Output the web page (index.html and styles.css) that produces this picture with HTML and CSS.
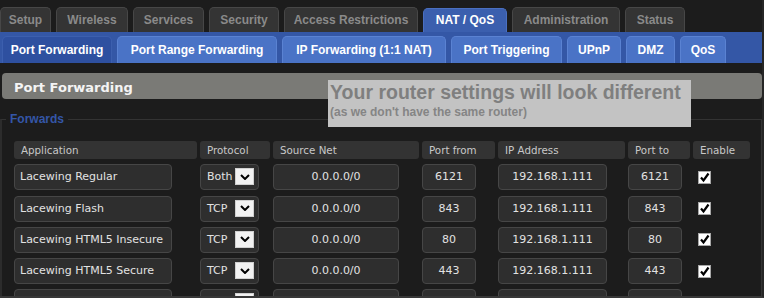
FILE: index.html
```html
<!DOCTYPE html>
<html>
<head>
<meta charset="utf-8">
<link rel="stylesheet" href="styles.css">
</head>
<body>
<div class="frame">
  <nav class="main-tabs">
    <div class="main-tab">Setup</div>
    <div class="main-tab">Wireless</div>
    <div class="main-tab">Services</div>
    <div class="main-tab">Security</div>
    <div class="main-tab">Access Restrictions</div>
    <div class="main-tab active">NAT / QoS</div>
    <div class="main-tab">Administration</div>
    <div class="main-tab">Status</div>
  </nav>
  <nav class="sub-bar">
    <div class="sub-tab active">Port Forwarding</div>
    <div class="sub-tab">Port Range Forwarding</div>
    <div class="sub-tab">IP Forwarding (1:1 NAT)</div>
    <div class="sub-tab">Port Triggering</div>
    <div class="sub-tab">UPnP</div>
    <div class="sub-tab">DMZ</div>
    <div class="sub-tab">QoS</div>
  </nav>
  <main class="content">
    <h2 class="section-title">Port Forwarding</h2>
    <fieldset class="forwards">
      <legend>Forwards</legend>
      <div class="table">
        <div class="th">Application</div>
        <div class="th">Protocol</div>
        <div class="th">Source Net</div>
        <div class="th">Port from</div>
        <div class="th">IP Address</div>
        <div class="th">Port to</div>
        <div class="th">Enable</div>

        <div class="cell"><div class="field w-app">Lacewing Regular</div></div>
        <div class="cell"><div class="field select"><span>Both</span><span class="drop"><svg width="10" height="6" viewBox="0 0 10 6"><polyline points="1,1 5,5 9,1" fill="none" stroke="#000" stroke-width="2"/></svg></span></div></div>
        <div class="cell"><div class="field center w-net">0.0.0.0/0</div></div>
        <div class="cell"><div class="field center w-port">6121</div></div>
        <div class="cell"><div class="field center w-ip">192.168.1.111</div></div>
        <div class="cell"><div class="field center w-port">6121</div></div>
        <div class="cell check-cell"><span class="check"><svg width="13" height="13" viewBox="0 0 13 13"><rect x="0.5" y="0.5" width="12" height="12" fill="#fff" stroke="#a8a8a8"/><polyline points="3,6.5 5.5,9.5 10.5,2.5" fill="none" stroke="#000" stroke-width="2.2"/></svg></span></div>

        <div class="cell"><div class="field w-app">Lacewing Flash</div></div>
        <div class="cell"><div class="field select"><span>TCP</span><span class="drop"><svg width="10" height="6" viewBox="0 0 10 6"><polyline points="1,1 5,5 9,1" fill="none" stroke="#000" stroke-width="2"/></svg></span></div></div>
        <div class="cell"><div class="field center w-net">0.0.0.0/0</div></div>
        <div class="cell"><div class="field center w-port">843</div></div>
        <div class="cell"><div class="field center w-ip">192.168.1.111</div></div>
        <div class="cell"><div class="field center w-port">843</div></div>
        <div class="cell check-cell"><span class="check"><svg width="13" height="13" viewBox="0 0 13 13"><rect x="0.5" y="0.5" width="12" height="12" fill="#fff" stroke="#a8a8a8"/><polyline points="3,6.5 5.5,9.5 10.5,2.5" fill="none" stroke="#000" stroke-width="2.2"/></svg></span></div>

        <div class="cell"><div class="field w-app">Lacewing HTML5 Insecure</div></div>
        <div class="cell"><div class="field select"><span>TCP</span><span class="drop"><svg width="10" height="6" viewBox="0 0 10 6"><polyline points="1,1 5,5 9,1" fill="none" stroke="#000" stroke-width="2"/></svg></span></div></div>
        <div class="cell"><div class="field center w-net">0.0.0.0/0</div></div>
        <div class="cell"><div class="field center w-port">80</div></div>
        <div class="cell"><div class="field center w-ip">192.168.1.111</div></div>
        <div class="cell"><div class="field center w-port">80</div></div>
        <div class="cell check-cell"><span class="check"><svg width="13" height="13" viewBox="0 0 13 13"><rect x="0.5" y="0.5" width="12" height="12" fill="#fff" stroke="#a8a8a8"/><polyline points="3,6.5 5.5,9.5 10.5,2.5" fill="none" stroke="#000" stroke-width="2.2"/></svg></span></div>

        <div class="cell"><div class="field w-app">Lacewing HTML5 Secure</div></div>
        <div class="cell"><div class="field select"><span>TCP</span><span class="drop"><svg width="10" height="6" viewBox="0 0 10 6"><polyline points="1,1 5,5 9,1" fill="none" stroke="#000" stroke-width="2"/></svg></span></div></div>
        <div class="cell"><div class="field center w-net">0.0.0.0/0</div></div>
        <div class="cell"><div class="field center w-port">443</div></div>
        <div class="cell"><div class="field center w-ip">192.168.1.111</div></div>
        <div class="cell"><div class="field center w-port">443</div></div>
        <div class="cell check-cell"><span class="check"><svg width="13" height="13" viewBox="0 0 13 13"><rect x="0.5" y="0.5" width="12" height="12" fill="#fff" stroke="#a8a8a8"/><polyline points="3,6.5 5.5,9.5 10.5,2.5" fill="none" stroke="#000" stroke-width="2.2"/></svg></span></div>

        <div class="cell"><div class="field w-app"></div></div>
        <div class="cell"><div class="field select"><span></span><span class="drop"><svg width="10" height="6" viewBox="0 0 10 6"><polyline points="1,1 5,5 9,1" fill="none" stroke="#000" stroke-width="2"/></svg></span></div></div>
        <div class="cell"><div class="field center w-net"></div></div>
        <div class="cell"><div class="field center w-port"></div></div>
        <div class="cell"><div class="field center w-ip"></div></div>
        <div class="cell"><div class="field center w-port"></div></div>
        <div class="cell check-cell"><span class="check"><svg width="13" height="13" viewBox="0 0 13 13"><rect x="0.5" y="0.5" width="12" height="12" fill="#fff" stroke="#a8a8a8"/><polyline points="3,6.5 5.5,9.5 10.5,2.5" fill="none" stroke="#000" stroke-width="2.2"/></svg></span></div>
      </div>
    </fieldset>
  </main>
  <div class="notice">
    <div class="notice-title">Your router settings will look different</div>
    <div class="notice-sub">(as we don't have the same router)</div>
  </div>
</div>
</body>
</html>
```
FILE: styles.css
```css
* { box-sizing: border-box; }
html, body { margin: 0; padding: 0; background: #1c1c1c; }

.frame {
  position: relative;
  width: 764px;
  height: 298px;
  overflow: hidden;
  border-right: 2px solid #262626;
  border-bottom: 2px solid #383838;
  font-family: "DejaVu Sans", sans-serif;
}

.main-tabs {
  display: grid;
  grid-template-columns: 51px 72px 71px 70px 134px 84px 108px 60px;
  column-gap: 5px;
  height: 32px;
  padding-top: 7px;
}
.main-tab {
  background: #343434;
  border: 1px solid #474747;
  border-bottom: none;
  border-radius: 5px 5px 0 0;
  color: #8a8a8a;
  font: bold 12px "Liberation Sans", Arial, sans-serif;
  text-align: center;
  line-height: 24px;
  white-space: nowrap;
}
.main-tab.active {
  margin-top: 1px;
  background: #3b5fae;
  border-color: #4a6fc0;
  color: #fff;
  line-height: 23px;
}

.sub-bar {
  display: grid;
  grid-template-columns: 110px 160px 164px 111px 54px 49px 46px;
  column-gap: 5px;
  height: 31px;
  padding: 4px 0 0 2px;
  background: #3457a6;
}
.sub-tab {
  background: #4a73c6;
  border: 1px solid #5a82d2;
  border-bottom: none;
  border-radius: 5px 5px 0 0;
  color: #fff;
  font: bold 12px "Liberation Sans", Arial, sans-serif;
  text-align: center;
  line-height: 26px;
  white-space: nowrap;
}
.sub-tab.active {
  background: #2e50a0;
  border-color: #3c5fae;
}

.content { padding: 10px 0 0 2px; }

.section-title {
  margin: 0;
  height: 26px;
  padding: 3px 0 0 12px;
  background: #7a7a76;
  border-radius: 4px;
  color: #f4f4f4;
  font: bold 13px "DejaVu Sans", sans-serif;
  line-height: 23px;
}

.forwards {
  margin: 13px 0 0 -2px;
  padding: 15px 0 20px 4px;
  border: 1px solid #333;
  border-left: 2px solid #2c2c2c;
  min-width: 0;
}
.forwards legend {
  padding: 0 4px;
  color: #3456a8;
  font: bold 12px "Liberation Sans", Arial, sans-serif;
  line-height: 14px;
}

.table {
  display: grid;
  grid-template-columns: 183px 70px 146px 73px 127px 62px 57px;
  grid-template-rows: 18px;
  grid-auto-rows: 26px;
  column-gap: 3px;
  row-gap: 5.25px;
  margin-left: 8px;
}
.th {
  background: #333;
  border-radius: 3px;
  color: #c8c8c8;
  font-size: 10.3px;
  line-height: 18px;
  padding-left: 7px;
  white-space: nowrap;
}
.cell { display: flex; align-items: stretch; }
.field {
  background: #2e2e2e;
  border: 1px solid #464646;
  border-radius: 4px;
  color: #e2e2e2;
  font-size: 11px;
  line-height: 24px;
  padding: 0 5px;
  white-space: nowrap;
  overflow: hidden;
}
.field.center { text-align: center; padding: 0; }
.w-app { width: 158px; }
.w-net { width: 126px; }
.w-port { width: 54px; }
.w-ip { width: 109px; }

.select {
  width: 59px;
  display: flex;
  align-items: center;
  justify-content: space-between;
  padding: 0 4px 0 6px;
}
.drop {
  width: 19px;
  height: 17px;
  margin-top: -1px;
  background: #f2f2f2;
  border: 1px solid #d0d0d0;
  display: flex;
  align-items: center;
  justify-content: center;
}
.drop svg { display: block; }

.check-cell { align-items: center; padding-left: 5px; }
.check { display: block; width: 13px; height: 13px; }
.check svg { display: block; }

.notice {
  position: absolute;
  left: 328px;
  top: 80px;
  width: 363px;
  height: 47px;
  padding: 2px 0 0 2px;
  background: #c3c3c3;
  color: #7f7f7f;
  font-family: "Liberation Sans", Arial, sans-serif;
  font-weight: bold;
}
.notice-title { font-size: 19.5px; line-height: 20px; white-space: nowrap; }
.notice-sub { font-size: 12px; line-height: 14px; margin-top: 3px; color: #858585; }
```
